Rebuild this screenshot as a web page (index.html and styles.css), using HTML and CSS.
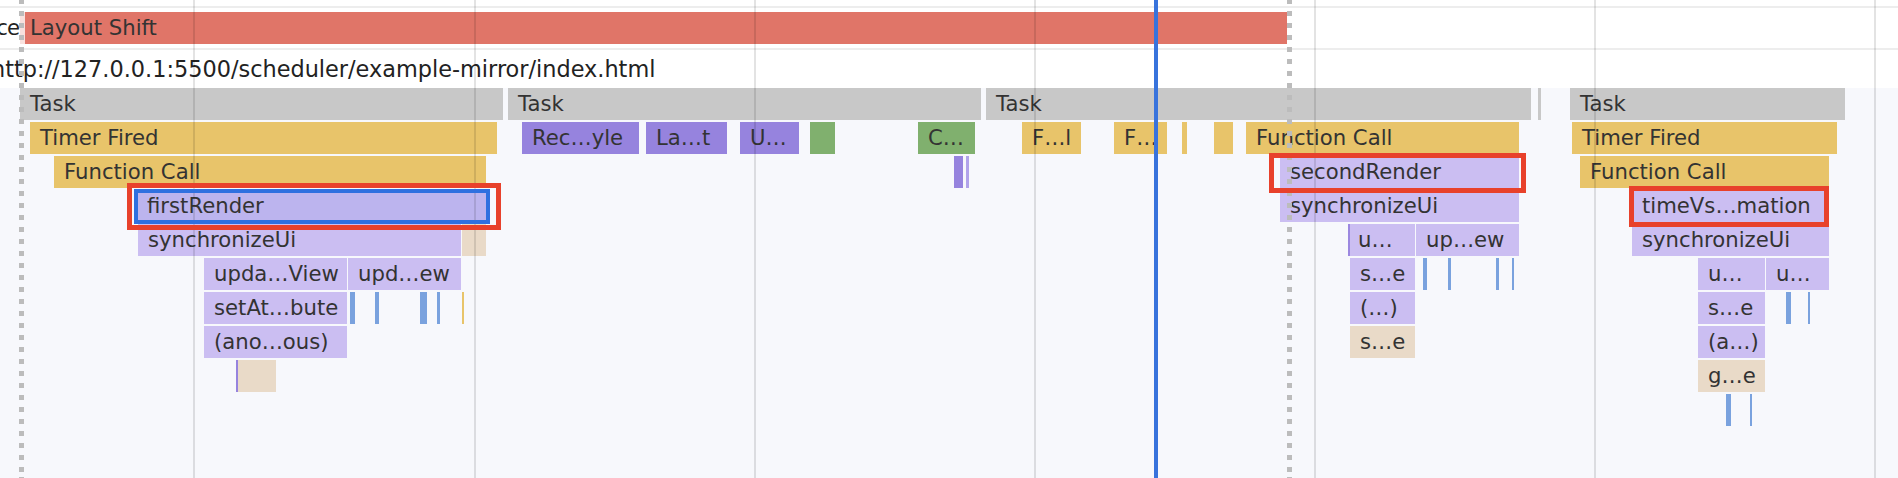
FILE: index.html
```html
<!DOCTYPE html>
<html lang="en">
<head>
<meta charset="utf-8">
<title>Performance flame chart</title>
<link rel="stylesheet" href="styles.css">
</head>
<body>
<div class="timeline">
  <div class="exp-track">
    <div class="track-label">Experience</div>
    <div class="bar shift" style="left:20px;width:1267px">Layout Shift</div>
  </div>
  <div class="main-header">http://127.0.0.1:5500/scheduler/example-mirror/index.html</div>
  <div class="flame">
    <div class="row">
      <div class="bar task" style="left:20px;width:483px">Task</div>
      <div class="bar task" style="left:508px;width:473px">Task</div>
      <div class="bar task" style="left:986px;width:545px">Task</div>
      <div class="bar task" style="left:1538px;width:3px"></div>
      <div class="bar task" style="left:1570px;width:275px">Task</div>
    </div>
    <div class="row">
      <div class="bar yellow" style="left:30px;width:467px">Timer Fired</div>
      <div class="bar render" style="left:522px;width:117px">Rec…yle</div>
      <div class="bar render" style="left:646px;width:81px">La…t</div>
      <div class="bar render" style="left:740px;width:59px">U…</div>
      <div class="bar paint" style="left:810px;width:25px"></div>
      <div class="bar paint" style="left:918px;width:57px">C…</div>
      <div class="bar yellow" style="left:1022px;width:59px">F…l</div>
      <div class="bar yellow" style="left:1114px;width:53px">F…</div>
      <div class="bar yellow" style="left:1182px;width:5px"></div>
      <div class="bar yellow" style="left:1214px;width:19px"></div>
      <div class="bar yellow" style="left:1246px;width:273px">Function Call</div>
      <div class="bar yellow" style="left:1572px;width:265px">Timer Fired</div>
    </div>
    <div class="row">
      <div class="bar yellow" style="left:54px;width:432px">Function Call</div>
      <div class="bar render" style="left:954px;width:9px"></div>
      <div class="bar lpurple" style="left:966px;width:3px"></div>
      <div class="bar script" style="left:1280px;width:239px">secondRender</div>
      <div class="bar yellow" style="left:1580px;width:249px">Function Call</div>
    </div>
    <div class="row">
      <div class="bar selected" style="left:137px;width:349px">firstRender</div>
      <div class="bar script" style="left:1280px;width:239px">synchronizeUi</div>
      <div class="bar script" style="left:1632px;width:197px">timeVs…mation</div>
    </div>
    <div class="row">
      <div class="bar script" style="left:138px;width:323px">synchronizeUi</div>
      <div class="bar gc" style="left:462px;width:24px"></div>
      <div class="bar script edge" style="left:1348px;width:67px">u…</div>
      <div class="bar script" style="left:1416px;width:103px">up…ew</div>
      <div class="bar script" style="left:1632px;width:197px">synchronizeUi</div>
    </div>
    <div class="row">
      <div class="bar script" style="left:204px;width:143px">upda…View</div>
      <div class="bar script" style="left:348px;width:113px">upd…ew</div>
      <div class="bar script" style="left:1350px;width:65px">s…e</div>
      <div class="bar blue" style="left:1423px;width:4px"></div>
      <div class="bar blue" style="left:1448px;width:3px"></div>
      <div class="bar blue" style="left:1496px;width:3px"></div>
      <div class="bar blue" style="left:1512px;width:2px"></div>
      <div class="bar script" style="left:1698px;width:67px">u…</div>
      <div class="bar script" style="left:1766px;width:63px">u…</div>
    </div>
    <div class="row">
      <div class="bar script" style="left:204px;width:143px">setAt…bute</div>
      <div class="bar blue" style="left:350px;width:5px"></div>
      <div class="bar blue" style="left:375px;width:4px"></div>
      <div class="bar blue" style="left:420px;width:7px"></div>
      <div class="bar blue" style="left:437px;width:3px"></div>
      <div class="bar yellow" style="left:462px;width:2px"></div>
      <div class="bar script" style="left:1350px;width:65px">(…)</div>
      <div class="bar script" style="left:1698px;width:67px">s…e</div>
      <div class="bar blue" style="left:1786px;width:5px"></div>
      <div class="bar blue" style="left:1808px;width:2px"></div>
    </div>
    <div class="row">
      <div class="bar script" style="left:204px;width:143px">(ano…ous)</div>
      <div class="bar gc" style="left:1350px;width:65px">s…e</div>
      <div class="bar script" style="left:1698px;width:67px">(a…)</div>
    </div>
    <div class="row">
      <div class="bar render" style="left:236px;width:2px"></div>
      <div class="bar gc" style="left:238px;width:38px"></div>
      <div class="bar gc" style="left:1698px;width:67px">g…e</div>
    </div>
    <div class="row">
      <div class="bar blue" style="left:1726px;width:5px"></div>
      <div class="bar blue" style="left:1750px;width:2px"></div>
    </div>
  </div>

  <div class="grid">
    <div></div><div></div><div></div><div></div><div></div><div></div><div></div>
  </div>
  <div class="dashed" style="left:19px"></div>
  <div class="dashed" style="left:1287px"></div>
  <div class="cursor"></div>
  <div class="selection"></div>
  <div class="annot annot-first"></div>
  <div class="annot annot-second"></div>
  <div class="annot annot-third"></div>
</div>
</body>
</html>
```

FILE: styles.css
```css
html, body {
  margin: 0;
  padding: 0;
  background: #ffffff;
}

.timeline {
  position: relative;
  width: 1898px;
  height: 478px;
  overflow: hidden;
  background: #ffffff;
  font-family: "DejaVu Sans", "Noto Sans", sans-serif;
  color: #333333;
}

/* Experience track */
.exp-track {
  position: relative;
  margin-top: 6px;
  height: 32px;
  padding: 4px 0;
  border-top: 2px solid #ededed;
  border-bottom: 2px solid #ededed;
}

.track-label {
  position: absolute;
  top: 4px;
  left: -175px;
  width: 200px;
  height: 32px;
  box-sizing: border-box;
  padding-right: 6px;
  text-align: right;
  font-size: 21.2px;
  letter-spacing: -1px;
  line-height: 32px;
  color: #222222;
  background: rgba(255, 255, 255, 0.78);
  white-space: nowrap;
  overflow: hidden;
  z-index: 2;
}

.exp-track .bar {
  top: 4px;
}

/* Main thread header */
.main-header {
  height: 38px;
  font-size: 22.4px;
  line-height: 38px;
  text-indent: -9px;
  white-space: nowrap;
  color: #222222;
}

/* Flame chart */
.flame {
  height: 390px;
  background: #f7f8fc;
}

.row {
  position: relative;
  height: 32px;
  margin-bottom: 2px;
}

.bar {
  position: absolute;
  top: 0;
  height: 32px;
  box-sizing: border-box;
  padding-left: 10px;
  font-size: 21.2px;
  line-height: 32px;
  white-space: nowrap;
  overflow: hidden;
  color: #333333;
}

.bar:empty {
  padding-left: 0;
}

.shift { background: #e07568; }
.task { background: #c8c8c8; }
.yellow { background: #e8c46a; }
.render { background: #9683de; }
.lpurple { background: #b1a3ea; }
.paint { background: #80b06e; }
.script { background: #cbbef2; }
.selected { background: #bcb4ee; }
.gc { background: #e9dac8; }
.blue { background: #7aa2de; }

.edge {
  border-left: 2px solid #9c88e0;
  padding-left: 8px;
}

/* Overlays */
.grid {
  position: absolute;
  top: 0;
  left: 0;
  right: 0;
  bottom: 0;
  display: flex;
  padding-left: 193px;
  pointer-events: none;
  z-index: 3;
}

.grid > div {
  flex: 0 0 280px;
  box-sizing: border-box;
  border-left: 2px solid rgba(0, 0, 0, 0.11);
}

.grid > div:first-child {
  flex-basis: 281px;
}

.dashed {
  position: absolute;
  top: 0;
  bottom: 0;
  width: 5px;
  background: repeating-linear-gradient(to bottom, #bcbcbc 0, #bcbcbc 5px, transparent 5px, transparent 12px);
  background-position: 0 -1px;
  z-index: 4;
}

.cursor {
  position: absolute;
  top: 0;
  bottom: 0;
  left: 1154px;
  width: 4px;
  background: #3873dc;
  z-index: 5;
}

.selection {
  position: absolute;
  left: 134px;
  top: 189px;
  width: 356px;
  height: 35px;
  box-sizing: border-box;
  border: 4px solid #2f70e0;
  z-index: 5;
}

.annot {
  position: absolute;
  box-sizing: border-box;
  border: 5px solid #e8412b;
  z-index: 6;
}

.annot-first {
  left: 127px;
  top: 183px;
  width: 374px;
  height: 47px;
}

.annot-second {
  left: 1269px;
  top: 153px;
  width: 257px;
  height: 40px;
}

.annot-third {
  left: 1629px;
  top: 186px;
  width: 200px;
  height: 41px;
}
```
